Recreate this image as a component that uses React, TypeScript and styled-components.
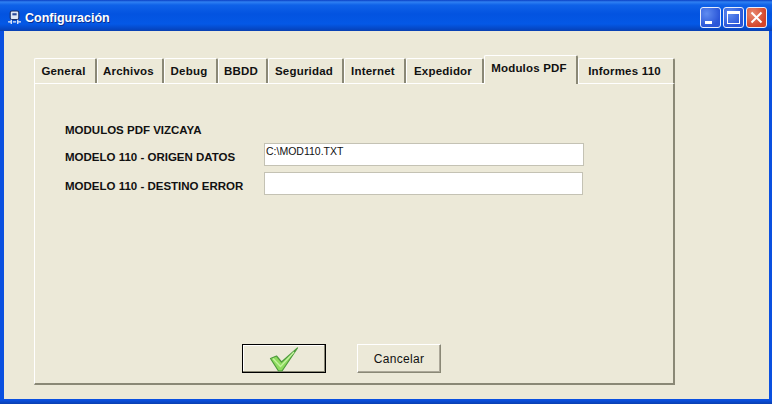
import styled, { createGlobalStyle } from "styled-components";

const tabs = [
  { label: "General", width: 63 },
  { label: "Archivos", width: 67 },
  { label: "Debug", width: 54 },
  { label: "BBDD", width: 50 },
  { label: "Seguridad", width: 76 },
  { label: "Internet", width: 62 },
  { label: "Expedidor", width: 78 },
  { label: "Modulos PDF", width: 94, active: true },
  { label: "Informes 110", width: 97 },
];

const App = () => {
  return (
    <>
      <GlobalStyle />
      <Window>
        <TitleBar>
          <AppIcon viewBox="0 0 14 14">
            <rect x="3" y="1" width="8" height="8" rx="1.5" fill="#dfe8f5" stroke="#1b2f66" />
            <rect x="5" y="3" width="4" height="2" fill="#2a4a9a" />
            <path d="M1 11h2.5M5.5 11h3M10.5 11h2.5M4 9v4M10 9v4" stroke="#e8eef8" strokeWidth="1.2" />
          </AppIcon>
          <Title>Configuración</Title>
          <Controls>
            <ControlButton>
              <MinimizeGlyph />
            </ControlButton>
            <ControlButton>
              <MaximizeGlyph />
            </ControlButton>
            <ControlButton $close>
              <svg width="13" height="13" viewBox="0 0 13 13">
                <path d="M1.5 1.5l10 10M11.5 1.5l-10 10" stroke="#fff" strokeWidth="2" />
              </svg>
            </ControlButton>
          </Controls>
        </TitleBar>
        <Body>
          <TabRow>
            {tabs.map((tab) => (
              <Tab key={tab.label} $width={tab.width} $active={tab.active}>
                {tab.label}
              </Tab>
            ))}
          </TabRow>
          <Panel>
            <Heading>MODULOS PDF VIZCAYA</Heading>
            <FormRow>
              <FieldLabel>MODELO 110 - ORIGEN DATOS</FieldLabel>
              <Field $width={320} readOnly value="C:\MOD110.TXT" />
            </FormRow>
            <FormRow>
              <FieldLabel>MODELO 110 - DESTINO ERROR</FieldLabel>
              <Field $width={319} readOnly value="" />
            </FormRow>
            <ButtonRow>
              <Button $default>
                <svg width="30" height="26" viewBox="0 0 30 26">
                  <path
                    d="M1.5 12.5l6-2.5 5 6L28.5 2 13 25h-3.5z"
                    fill="#8fdc5f"
                    stroke="#4d9a3c"
                    strokeWidth="1.2"
                    strokeLinejoin="round"
                  />
                  <path d="M4 12.5l7.5 8L25 6" fill="none" stroke="#c4f2a0" strokeWidth="1.3" />
                </svg>
              </Button>
              <Button>Cancelar</Button>
            </ButtonRow>
          </Panel>
        </Body>
      </Window>
    </>
  );
};

const GlobalStyle = createGlobalStyle`
  html, body {
    margin: 0;
    padding: 0;
    width: 772px;
    height: 404px;
    overflow: hidden;
    background: #ece9d8;
  }
`;

const Window = styled.div`
  width: 772px;
  height: 404px;
  box-sizing: border-box;
  display: flex;
  flex-direction: column;
  background: linear-gradient(to bottom, #0a50e0 0, #0a50e0 400px, #0a3fb0 404px);
  font-family: "Liberation Sans", Arial, sans-serif;
`;

const TitleBar = styled.div`
  height: 31px;
  flex: none;
  box-sizing: border-box;
  padding: 4px 5px 0 7px;
  display: flex;
  align-items: center;
  background: linear-gradient(
    to bottom,
    #0a3fc4 0,
    #2f80f2 2px,
    #0f62e8 5px,
    #0353e0 14px,
    #0458e6 24px,
    #0547c4 29px,
    #0a3fb0 31px
  );
`;

const AppIcon = styled.svg`
  width: 15px;
  height: 15px;
  margin-right: 3px;
`;

const Title = styled.span`
  flex: 1;
  color: #fff;
  font-size: 12.5px;
  font-weight: bold;
  text-shadow: 1px 1px 0 #0a2f90;
`;

const Controls = styled.div`
  display: flex;
  gap: 2px;
`;

const ControlButton = styled.div<{ $close?: boolean }>`
  width: 21px;
  height: 21px;
  box-sizing: border-box;
  border: 1px solid #e8eefc;
  border-radius: 3px;
  display: flex;
  align-items: center;
  justify-content: center;
  background: ${(p) =>
    p.$close
      ? "radial-gradient(circle at 30% 30%, #e88a70, #d5452a 70%)"
      : "radial-gradient(circle at 30% 30%, #5f8cf0, #2a56d8 70%)"};
`;

const MinimizeGlyph = styled.div`
  width: 7px;
  height: 3px;
  background: #fff;
  align-self: flex-end;
  margin: 0 5px 3px 0;
`;

const MaximizeGlyph = styled.div`
  width: 13px;
  height: 13px;
  box-sizing: border-box;
  border: 1px solid #fff;
  border-top-width: 3px;
`;

const Body = styled.div`
  flex: 1;
  min-height: 0;
  margin: 0 3px 5px 4px;
  padding: 27px 94px 14px 30px;
  background: #ece9d8;
  display: flex;
  flex-direction: column;
`;

const TabRow = styled.div`
  height: 25px;
  flex: none;
  display: flex;
  align-items: flex-end;
  position: relative;
  z-index: 1;
`;

const Tab = styled.div<{ $width: number; $active?: boolean }>`
  width: ${(p) => p.$width}px;
  height: ${(p) => (p.$active ? 29 : 25)}px;
  margin-bottom: ${(p) => (p.$active ? -1 : 0)}px;
  flex: none;
  box-sizing: border-box;
  padding: 0 3px ${(p) => (p.$active ? 4 : 0)}px 0;
  display: flex;
  align-items: center;
  justify-content: center;
  background: #ece9d8;
  border-top: 1px solid #fff;
  border-left: 1px solid #fff;
  border-right: 2px solid #8a8876;
  border-radius: 2px 2px 0 0;
  color: #111;
  font-size: 11.5px;
  font-weight: bold;
  letter-spacing: 0.2px;
  white-space: nowrap;
`;

const Panel = styled.div`
  flex: 1;
  min-height: 0;
  box-sizing: border-box;
  padding: 40px 0 10px 30px;
  background: #ece9d8;
  border-top: 1px solid #fff;
  border-left: 1px solid #fff;
  border-right: 2px solid #8a8876;
  border-bottom: 2px solid #8a8876;
  display: flex;
  flex-direction: column;
`;

const Heading = styled.div`
  height: 13px;
  margin-bottom: 6px;
  line-height: 13px;
  color: #111;
  font-size: 11.5px;
  font-weight: bold;
`;

const FormRow = styled.div`
  display: flex;
  align-items: center;
  height: 22px;
  margin-bottom: 7px;
`;

const FieldLabel = styled.label`
  width: 199px;
  flex: none;
  padding-top: 5px;
  color: #111;
  font-size: 11.5px;
  font-weight: bold;
  white-space: nowrap;
`;

const Field = styled.input<{ $width: number }>`
  width: ${(p) => p.$width}px;
  height: 23px;
  box-sizing: border-box;
  padding: 0 0 7px 1px;
  background: #fff;
  border: 1px solid #c4c2b4;
  outline: none;
  color: #111;
  font-family: "Liberation Sans", Arial, sans-serif;
  font-size: 10.5px;
`;

const ButtonRow = styled.div`
  margin-top: auto;
  padding-left: 177px;
  display: flex;
  gap: 31px;
`;

const Button = styled.div<{ $default?: boolean }>`
  width: 84px;
  height: 29px;
  box-sizing: border-box;
  display: flex;
  align-items: center;
  justify-content: center;
  background: #ece9d8;
  color: #111;
  font-size: 12px;
  letter-spacing: 0.3px;
  border: 1px solid;
  border-color: ${(p) => (p.$default ? "#000" : "#fff #8a8876 #8a8876 #fff")};
  box-shadow: ${(p) =>
    p.$default ? "inset -1px -1px 0 #8a8876, inset 1px 1px 0 #fff" : "inset -1px -1px 0 #aca899"};
`;

export default App;
